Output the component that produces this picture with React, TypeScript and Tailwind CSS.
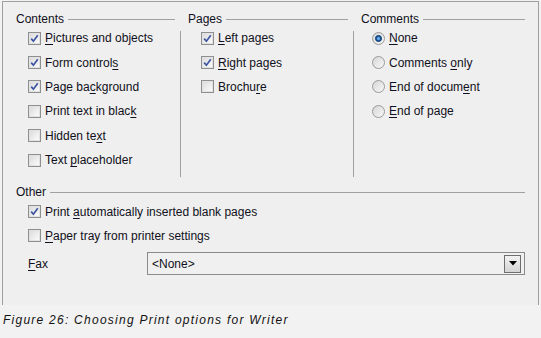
import React from "react";

type Item = { label: string; key: number; checked?: boolean };

const contents: Item[] = [
  { label: "Pictures and objects", key: 0, checked: true },
  { label: "Form controls", key: 12, checked: true },
  { label: "Page background", key: 7, checked: true },
  { label: "Print text in black", key: 18 },
  { label: "Hidden text", key: 9 },
  { label: "Text placeholder", key: 5 },
];

const pages: Item[] = [
  { label: "Left pages", key: 0, checked: true },
  { label: "Right pages", key: 0, checked: true },
  { label: "Brochure", key: 6 },
];

const comments: Item[] = [
  { label: "None", key: 0, checked: true },
  { label: "Comments only", key: 9 },
  { label: "End of document", key: 12 },
  { label: "End of page", key: 0 },
];

function Label({ text, at }: { text: string; at: number }) {
  return (
    <span className="whitespace-nowrap">
      {text.slice(0, at)}
      <span className="underline underline-offset-2">{text[at]}</span>
      {text.slice(at + 1)}
    </span>
  );
}

function CheckBox({ checked }: { checked?: boolean }) {
  return (
    <div className="w-[13px] h-[13px] border border-[#8e8f8f] bg-[#f4f4f4] flex items-center justify-center shrink-0">
      <div className="w-[11px] h-[11px] border border-[#e2e2e2] bg-gradient-to-br from-[#dcdcdc] to-[#fbfbfb] flex items-center justify-center">
        {checked && (
          <svg width="9" height="9" viewBox="0 0 9 9">
            <path d="M1.2 4.6 L3.4 7.2 L7.8 1.2" fill="none" stroke="#3d55a0" strokeWidth="1.7" />
          </svg>
        )}
      </div>
    </div>
  );
}

function Radio({ checked }: { checked?: boolean }) {
  return (
    <div className="w-[13px] h-[13px] rounded-full border border-[#9a9a9a] bg-gradient-to-br from-[#d6d6d6] to-[#f8f8f8] flex items-center justify-center shrink-0">
      {checked && (
        <div className="w-[7px] h-[7px] rounded-full bg-[#1d5aa0] border border-[#0f3b70] flex items-center justify-center">
          <div className="w-[3px] h-[3px] rounded-full bg-[#6fb0ea]" />
        </div>
      )}
    </div>
  );
}

function Header({ title }: { title: string }) {
  return (
    <div className="flex items-center h-[14px] gap-[4px]">
      <span>{title}</span>
      <div className="flex-1 h-px bg-[#a0a0a0] mt-[1px]" />
    </div>
  );
}

function Row({ item, radio }: { item: Item; radio?: boolean }) {
  return (
    <div className="flex items-center h-[24.4px] gap-[4px]">
      {radio ? <Radio checked={item.checked} /> : <CheckBox checked={item.checked} />}
      <Label text={item.label} at={item.key} />
    </div>
  );
}

export default function App() {
  return (
    <div
      className="w-[541px] h-[338px] bg-[#f2f2f2] text-[12px] text-[#101020] leading-none overflow-hidden"
      style={{ fontFamily: '"Liberation Sans", Arial, sans-serif' }}
    >
      <div className="ml-[2px] mt-[1px] w-[537px] h-[304px] border-l border-t border-r border-[#a0a0a0] bg-[#efefef] pl-[13px] pr-[13px] pt-[10px]">
        <div className="flex">
          <div className="w-[159px] mr-[5px]">
            <Header title="Contents" />
            <div className="pl-[12px] pb-[5px]">
              {contents.map((c) => (
                <Row key={c.label} item={c} />
              ))}
            </div>
          </div>
          <div className="w-[168px] mr-[5px] flex flex-col">
            <div className="pl-[8px]">
              <Header title="Pages" />
            </div>
            <div className="flex flex-1">
              <div className="w-px bg-[#a0a0a0] mt-[5px]" />
              <div className="pl-[20px]">
                {pages.map((c) => (
                  <Row key={c.label} item={c} />
                ))}
              </div>
            </div>
          </div>
          <div className="flex-1 flex flex-col">
            <div className="pl-[8px]">
              <Header title="Comments" />
            </div>
            <div className="flex flex-1">
              <div className="w-px bg-[#a0a0a0] mt-[5px]" />
              <div className="pl-[18px]">
                {comments.map((c) => (
                  <Row key={c.label} item={c} radio />
                ))}
              </div>
            </div>
          </div>
        </div>

        <div className="mt-[8px]">
          <Header title="Other" />
          <div className="pl-[12px]">
            <Row item={{ label: "Print automatically inserted blank pages", key: 6, checked: true }} />
            <Row item={{ label: "Paper tray from printer settings", key: 0 }} />
            <div className="flex items-center h-[23px] mt-[4px]">
              <div className="w-[119px]">
                <Label text="Fax" at={0} />
              </div>
              <div className="flex-1 h-[23px] border border-[#8a8a8a] bg-[#f0f0f0] flex items-center justify-between pl-[4px] pr-[3px]">
                <span>&lt;None&gt;</span>
                <div className="w-[17px] h-[18px] border border-[#6e6e6e] bg-gradient-to-b from-[#f2f2f2] to-[#d4d4d4] flex items-center justify-center">
                  <svg width="8" height="5" viewBox="0 0 8 5">
                    <path d="M0 0 H8 L4 4.5 Z" fill="#000" />
                  </svg>
                </div>
              </div>
            </div>
          </div>
        </div>
      </div>
      <div className="pl-[3px] pt-[9px] italic tracking-[1.25px] text-[12px] text-[#111]">
        Figure 26: Choosing Print options for Writer
      </div>
    </div>
  );
}
